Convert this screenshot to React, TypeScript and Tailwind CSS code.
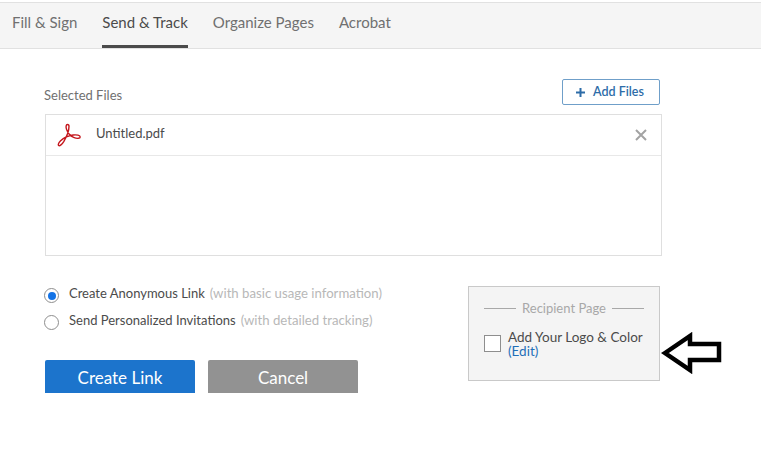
const font = "font-['Lato','Noto_Sans',sans-serif]";

function AcrobatIcon() {
  return (
    <svg width="26" height="24" viewBox="0 0 26 24" fill="none" stroke="#c4161c" strokeWidth="1.4" strokeLinejoin="round">
      <path d="M11.5 1.5c-1.6 0-1.8 2.4-.9 5 1.4 4 4.4 7 7.6 8.2 2.6 1 6 .9 6-.8 0-1.700-3.600-2.300-7-1.900-4.400.5-9.500 2.700-12.600 5.700-1.700 1.700-3 4-2 4.800 1.100.8 3.400-1 5.300-4.100C10.600 13.700 13 6.500 13 3.500c0-1.300-.5-2-1.500-2z" />
    </svg>
  );
}

function Tab({ label, active }: { label: string; active?: boolean }) {
  return (
    <div className={`flex h-full items-center border-b-[3px] pb-[3px] text-[15px] ${active ? 'border-[#4b4b4b] text-[#4b4b4b]' : 'border-transparent text-[#707070]'}`}>
      {label}
    </div>
  );
}

function Radio({ checked, label, hint }: { checked?: boolean; label: string; hint: string }) {
  return (
    <div className="flex h-[27px] items-center text-[13px]">
      <span className="mr-[10px] flex h-[15px] w-[15px] items-center justify-center rounded-full border border-[#8e8e8e] bg-white">
        {checked && <span className="h-[8px] w-[8px] rounded-full bg-[#1473e6]" />}
      </span>
      <span className="-mt-[3px] text-[#4b4b4b]">{label}</span>
      <span className="-mt-[3px] ml-[5px] text-[13.2px] text-[#b8b8b8]">{hint}</span>
    </div>
  );
}

export default function App() {
  return (
    <div className={`relative h-[470px] w-[761px] overflow-hidden bg-white pt-[2px] ${font}`}>
      <div className="flex h-[47px] gap-[25px] border-y border-[#e1e1e1] bg-[#f5f5f5] pl-[12px]">
        <Tab label="Fill & Sign" />
        <Tab label="Send & Track" active />
        <Tab label="Organize Pages" />
        <Tab label="Acrobat" />
      </div>

      <div className="pl-[45px] pt-[30px]">
        <div className="flex h-[26px] w-[615px] items-center justify-between">
          <span className="-ml-[1px] mt-[8px] text-[13px] text-[#707070]">Selected Files</span>
          <button className="flex h-[26px] w-[98px] items-center justify-center gap-[7px] rounded-[2px] border border-[#6f9fc9] bg-white pr-[3px] text-[12.5px] font-semibold text-[#2d6ca8]">
            <svg width="11" height="11" viewBox="0 0 11 11" stroke="#2d6ca8" strokeWidth="2">
              <path d="M5.500 1v9M1 5.500h9" />
            </svg>
            Add Files
          </button>
        </div>

        <div className="mt-[9px] h-[142px] w-[617px] border border-[#dfdfdf]">
          <div className="flex h-[41px] items-center justify-between border-b border-[#e8e8e8] pl-[10px] pr-[13px]">
            <div className="flex items-center gap-[14px]">
              <AcrobatIcon />
              <span className="-mt-[2px] text-[13px] text-[#4b4b4b]">Untitled.pdf</span>
            </div>
            <svg width="14" height="14" viewBox="0 0 14 14" stroke="#a3a3a3" strokeWidth="2">
              <path d="M2 2l10 10M12 2L2 12" />
            </svg>
          </div>
        </div>

        <div className="mt-[30px] flex w-[615px] items-start justify-between">
          <div className="-ml-[1px]">
            <div className="-mt-[4px]">
              <Radio checked label="Create Anonymous Link" hint="(with basic usage information)" />
              <Radio label="Send Personalized Invitations" hint="(with detailed tracking)" />
            </div>
            <div className="ml-[1px] mt-[24px] flex gap-[13px]">
              <button className="flex h-[33px] w-[150px] items-center justify-center rounded-t-[2px] bg-[#1c74cc] pt-[2px] text-[17px] text-white">
                Create Link
              </button>
              <button className="flex h-[33px] w-[150px] items-center justify-center rounded-t-[2px] bg-[#929292] pt-[2px] text-[17px] text-white">
                Cancel
              </button>
            </div>
          </div>

          <div className="h-[95px] w-[192px] border border-[#c9c9c9] bg-[#f4f4f4] px-[15px] pt-[12px]">
            <div className="flex items-center gap-[6px] text-[13px] text-[#a8a8a8]">
              <span className="h-px flex-1 bg-[#a8a8a8]" />
              Recipient Page
              <span className="h-px flex-1 bg-[#a8a8a8]" />
            </div>
            <div className="mt-[13px] flex gap-[7px]">
              <span className="mt-[3px] h-[17px] w-[17px] shrink-0 border border-[#8e8e8e] bg-white" />
              <div className="-mt-[2px] text-[13.5px] leading-[14px] text-[#4b4b4b]">
                <div className="whitespace-nowrap">Add Your Logo &amp; Color</div>
                <div className="text-[#1f6fb8]">(Edit)</div>
              </div>
            </div>
          </div>
        </div>
      </div>

      <svg className="absolute left-[660px] top-[332px]" width="64" height="42" viewBox="0 0 64 42" fill="none" stroke="#000" strokeWidth="4.500">
        <path d="M5 21L30 4v8h29v16H30v10z" />
      </svg>
    </div>
  );
}
